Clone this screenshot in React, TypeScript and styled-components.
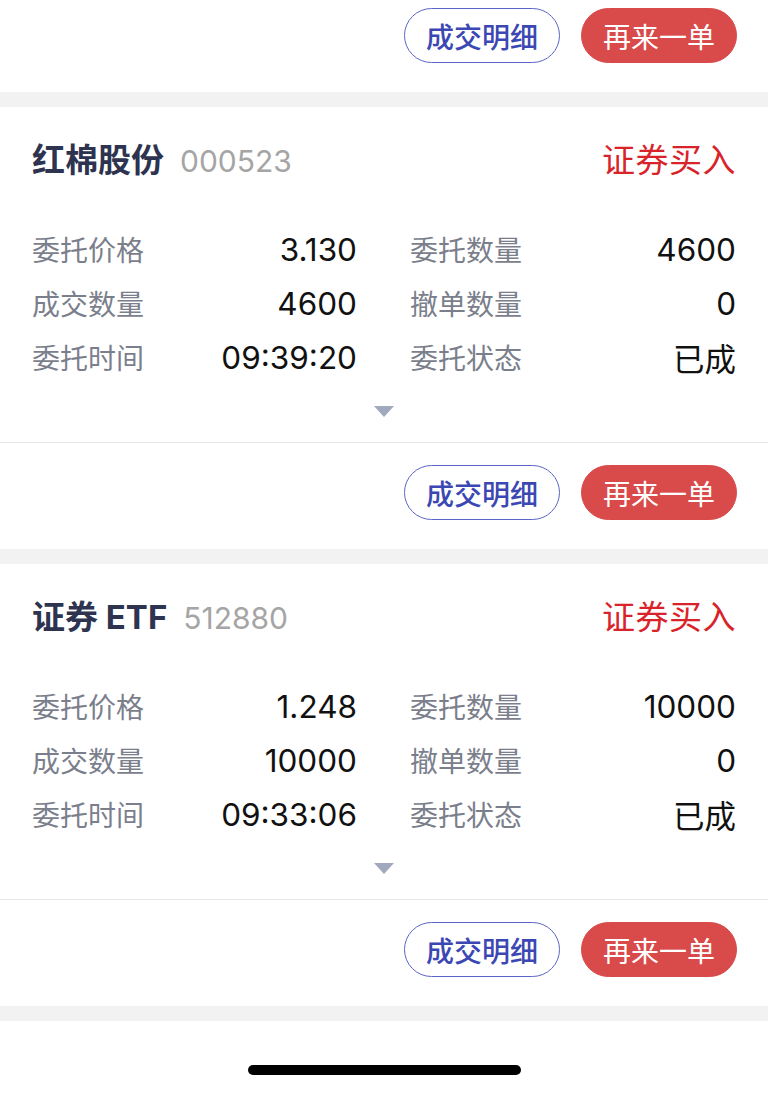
import styled, { createGlobalStyle } from "styled-components"

const GlobalStyle = createGlobalStyle`
  html, body {
    margin: 0;
    padding: 0;
    background: #ffffff;
  }
  body {
    font-family: Inter, "Noto Sans CJK SC", sans-serif;
    -webkit-font-smoothing: antialiased;
  }
`

interface Order {
  name: string
  code: string
  side: string
  price: string
  amount: string
  dealt: string
  cancelled: string
  time: string
  status: string
}

const orders: Order[] = [
  {
    name: "红棉股份",
    code: "000523",
    side: "证券买入",
    price: "3.130",
    amount: "4600",
    dealt: "4600",
    cancelled: "0",
    time: "09:39:20",
    status: "已成",
  },
  {
    name: "证券 ETF",
    code: "512880",
    side: "证券买入",
    price: "1.248",
    amount: "10000",
    dealt: "10000",
    cancelled: "0",
    time: "09:33:06",
    status: "已成",
  },
]

const Page = styled.div`
  width: 768px;
  min-height: 1094px;
  display: flex;
  flex-direction: column;
  background: #ffffff;
`

const Band = styled.div`
  height: 15px;
  background: #f2f2f2;
`

const Card = styled.div`
  display: flex;
  flex-direction: column;
  background: #ffffff;
`

const Header = styled.div`
  display: flex;
  align-items: center;
  justify-content: space-between;
  height: 44px;
  margin-top: 29px;
  padding: 0 32px;
`

const TitleGroup = styled.div`
  display: flex;
  align-items: baseline;
  gap: 16px;
`

const Name = styled.span`
  font-size: 33px;
  font-weight: 700;
  color: #2e3350;
`

const Code = styled.span`
  font-size: 30px;
  color: #a5a5a5;
`

const Side = styled.span`
  font-size: 33px;
  color: #d8232a;
  letter-spacing: 0.5px;
`

const Grid = styled.div`
  display: grid;
  grid-template-columns: 325px 326px;
  grid-auto-rows: 54px;
  column-gap: 53px;
  margin-top: 42px;
  padding: 0 32px;
`

const Cell = styled.div`
  display: flex;
  align-items: center;
  justify-content: space-between;
`

const Label = styled.span`
  font-size: 28px;
  color: #7b7f8c;
`

const Value = styled.span`
  font-size: 31.5px;
  color: #111111;
`

const Toggle = styled.div`
  display: flex;
  justify-content: center;
  padding: 22px 0 25px;
`

const Divider = styled.div`
  height: 1px;
  background: #e6e6e6;
`

const Actions = styled.div<{ $top?: number }>`
  display: flex;
  justify-content: flex-end;
  gap: 21px;
  padding: ${(p) => p.$top ?? 22}px 31px 29px 0;
`

const Pill = styled.button<{ $filled?: boolean }>`
  box-sizing: border-box;
  width: 156px;
  height: 55px;
  border-radius: 28px;
  border: 1px solid ${(p) => (p.$filled ? "#d94a4a" : "#5c65c6")};
  background: ${(p) => (p.$filled ? "#d94a4a" : "#ffffff")};
  color: ${(p) => (p.$filled ? "#ffffff" : "#3b47b3")};
  font-family: "Noto Sans CJK SC", sans-serif;
  font-size: 28px;
  font-weight: ${(p) => (p.$filled ? 400 : 500)};
  padding: 0;
  display: flex;
  align-items: center;
  justify-content: center;
`

const Footer = styled.div`
  flex: 1;
  display: flex;
  justify-content: center;
  padding-top: 44px;
`

const HomeBar = styled.div`
  width: 273px;
  height: 10px;
  border-radius: 5px;
  background: #000000;
`

const Caret = () => (
  <svg width="20" height="11" viewBox="0 0 20 11">
    <path d="M0 0 H20 L10 11 Z" fill="#a2a8bd" />
  </svg>
)

const ActionRow = ({ top }: { top?: number }) => (
  <Actions $top={top}>
    <Pill>成交明细</Pill>
    <Pill $filled>再来一单</Pill>
  </Actions>
)

const OrderCard = ({ order }: { order: Order }) => {
  const cells: [string, string][] = [
    ["委托价格", order.price],
    ["委托数量", order.amount],
    ["成交数量", order.dealt],
    ["撤单数量", order.cancelled],
    ["委托时间", order.time],
    ["委托状态", order.status],
  ]
  return (
    <Card>
      <Header>
        <TitleGroup>
          <Name>{order.name}</Name>
          <Code>{order.code}</Code>
        </TitleGroup>
        <Side>{order.side}</Side>
      </Header>
      <Grid>
        {cells.map(([label, value]) => (
          <Cell key={label}>
            <Label>{label}</Label>
            <Value>{value}</Value>
          </Cell>
        ))}
      </Grid>
      <Toggle>
        <Caret />
      </Toggle>
      <Divider />
      <ActionRow />
    </Card>
  )
}

export default function App() {
  return (
    <>
      <GlobalStyle />
      <Page>
        <ActionRow top={8} />
        <Band />
        {orders.map((o) => (
          <div key={o.code}>
            <OrderCard order={o} />
            <Band />
          </div>
        ))}
        <Footer>
          <HomeBar />
        </Footer>
      </Page>
    </>
  )
}
